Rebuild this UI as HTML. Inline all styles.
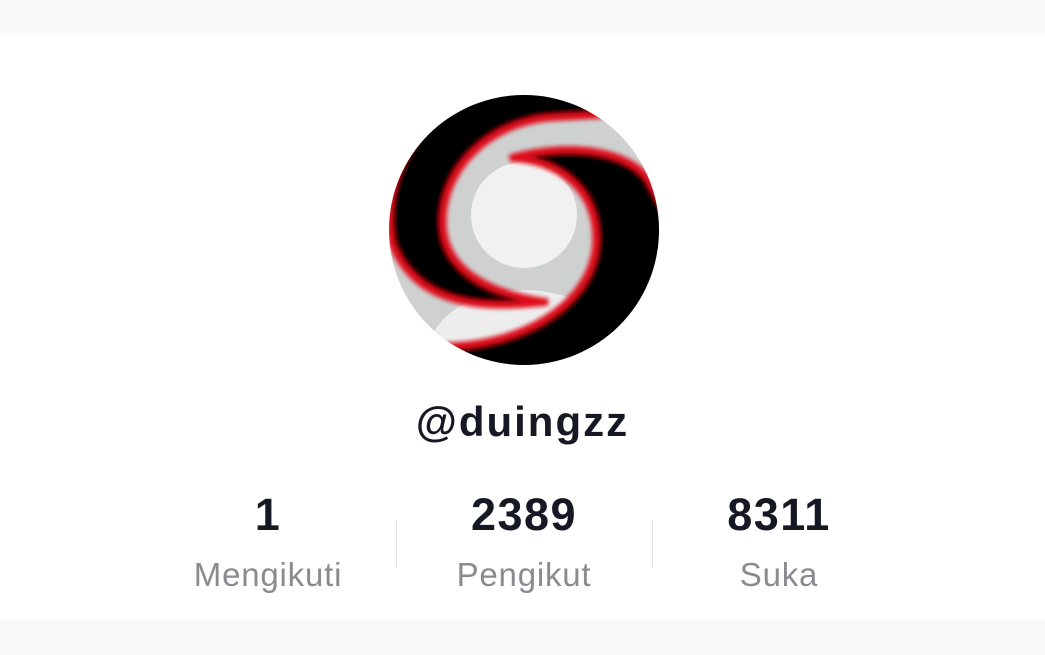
<!DOCTYPE html>
<html><head><meta charset="utf-8"><style>
body{margin:0;width:1045px;height:655px;background:#fff;position:relative;overflow:hidden;font-family:"Liberation Sans",sans-serif}
.top{position:absolute;left:0;top:0;width:1045px;height:33px;background:#f8f8f8}
.bot{position:absolute;left:0;top:621px;width:1045px;height:34px;background:#f8f8f8}
.name{position:absolute;left:0;width:1045px;top:398px;text-align:center;font-size:42px;font-weight:bold;color:#161823;letter-spacing:2px}
.col{position:absolute;width:256px;text-align:center}
.n{font-size:45px;font-weight:bold;color:#161823;line-height:46px;letter-spacing:1.5px}
.l{font-size:33px;color:#8a8b91;margin-top:18px;letter-spacing:0.8px}
.div{position:absolute;top:520px;width:1px;height:47px;background:#e3e3e4}
</style></head><body>
<div class="top"></div>
<svg style="position:absolute;left:388px;top:94px" width="272" height="272" viewBox="0 0 272 272">
<defs><clipPath id="c"><circle cx="136" cy="136" r="135"/></clipPath>
<filter id="b"><feGaussianBlur stdDeviation="2"/></filter></defs>
<g clip-path="url(#c)">
<rect width="272" height="272" fill="#cfd0d0"/>
<circle cx="136" cy="121" r="53" fill="#f1f1f1"/>
<ellipse cx="136" cy="258" rx="95" ry="62" fill="#ededed"/>
<g stroke="#e0101a" stroke-width="7" filter="url(#b)">
<path d="M225,20 A136,136 0 0 0 4,150 C 30,215 100,215 160,208 C 100,200 55,175 55,128 C 55,75 100,30 160,24 C 185,22 205,22 225,20 Z" fill="#000"/>
<path d="M122,64 C 190,45 250,60 264,92 L 290,140 L 280,290 L 60,290 L 55,252 C 140,252 208,205 208,145 C 208,95 170,66 122,64 Z" fill="#000"/>
</g>
</g>
</svg>
<div class="name">@duingzz</div>
<div class="col" style="left:140px;top:492px"><div class="n">1</div><div class="l">Mengikuti</div></div>
<div class="col" style="left:396px;top:492px"><div class="n">2389</div><div class="l">Pengikut</div></div>
<div class="col" style="left:651px;top:492px"><div class="n">8311</div><div class="l">Suka</div></div>
<div class="div" style="left:396px"></div>
<div class="div" style="left:652px"></div>
<div class="bot"></div>
</body></html>
